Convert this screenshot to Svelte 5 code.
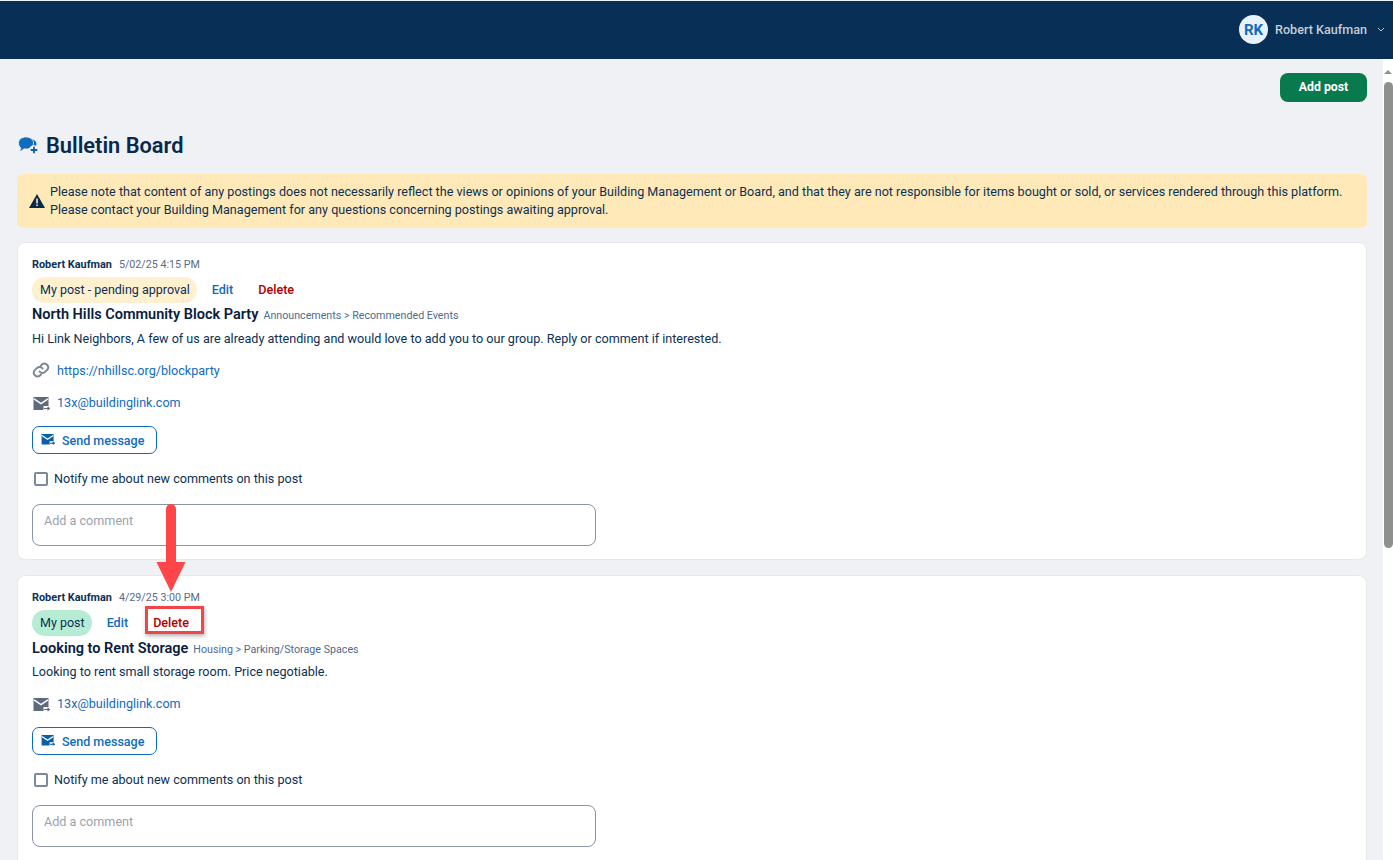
<script>
	const posts = [
		{
			author: 'Robert Kaufman',
			date: '5/02/25 4:15 PM',
			badge: 'My post - pending approval',
			pending: true,
			title: 'North Hills Community Block Party',
			category: 'Announcements > Recommended Events',
			body: 'Hi Link Neighbors, A few of us are already attending and would love to add you to our group. Reply or comment if interested.',
			link: 'https://nhillsc.org/blockparty',
			email: '13x@buildinglink.com'
		},
		{
			author: 'Robert Kaufman',
			date: '4/29/25 3:00 PM',
			badge: 'My post',
			pending: false,
			title: 'Looking to Rent Storage',
			category: 'Housing > Parking/Storage Spaces',
			body: 'Looking to rent small storage room. Price negotiable.',
			link: null,
			email: '13x@buildinglink.com'
		}
	];
</script>

<div class="page">
	<header class="topbar">
		<div class="user">
			<span class="avatar">RK</span>
			<span class="user-name">Robert Kaufman</span>
			<svg class="chev" width="8" height="5" viewBox="0 0 8 5"><path d="M1 1l3 3 3-3" fill="none" stroke="#b9c4d2" stroke-width="1"/></svg>
		</div>
	</header>

	<div class="body-row">
		<main class="content">
			<div class="actions">
				<button class="add-post">Add post</button>
			</div>

			<div class="heading">
				<svg width="21" height="19" viewBox="0 0 21 19">
					<ellipse cx="13.500" cy="8" rx="5" ry="4.500" fill="#0f6cbd"/>
					<path d="M8 1c4.300 0 7.500 2.500 7.500 6s-3.200 6-7.500 6c-.8 0-1.500-.1-2.200-.2C4.800 14.100 3.200 15 1.300 15.300c.8-.9 1.300-2 1.500-3.300C1.400 10.900.5 9.100.5 7 .5 3.500 3.700 1 8 1z" fill="#0f6cbd" stroke="#eff1f5" stroke-width=".8"/>
					<circle cx="16" cy="14" r="4.800" fill="#eff1f5"/>
					<path d="M16 10.700v6.600M12.700 14h6.600" stroke="#0f5ea8" stroke-width="1.800" fill="none"/>
				</svg>
				<h1>Bulletin Board</h1>
			</div>

			<div class="notice">
				<svg width="16" height="14" viewBox="0 0 16 14"><path d="M8 0l8 14H0z" fill="#08294d"/><path d="M7.200 4.500h1.600v5H7.200zM7.200 10.500h1.600v1.600H7.200z" fill="#ffe9b8"/></svg>
				<p>Please note that content of any postings does not necessarily reflect the views or opinions of your Building Management or Board, and that they are not responsible for items bought or sold, or services rendered through this platform.<br />Please contact your Building Management for any questions concerning postings awaiting approval.</p>
			</div>

			{#each posts as post}
				<article class="card">
					<div class="meta">
						<span class="author">{post.author}</span>
						<span class="date">{post.date}</span>
					</div>
					<div class="badge-row">
						<span class="badge" class:pending={post.pending}>{post.badge}</span>
						<a class="edit" href="#edit">Edit</a>
						<a class="delete" href="#delete">Delete</a>
					</div>
					<div class="title-row" class:tight={!post.pending}>
						<h2>{post.title}</h2>
						<span class="category">{post.category}</span>
					</div>
					<p class="text">{post.body}</p>
					{#if post.link}
						<div class="contact">
							<svg width="18" height="18" viewBox="0 0 24 24" fill="none" stroke="#7b8694" stroke-width="2.600" stroke-linecap="round">
								<path d="M10 14a5 5 0 0 0 7.500.5l3-3a5 5 0 0 0-7-7l-1.700 1.700"/>
								<path d="M14 10a5 5 0 0 0-7.500-.5l-3 3a5 5 0 0 0 7 7l1.700-1.700"/>
							</svg>
							<a href="#link">{post.link}</a>
						</div>
					{/if}
					<div class="contact">
						<svg class="mail-icon" width="18" height="15" viewBox="0 0 18 15">
							<path d="M1.500 0h15v9h-5v4h-10z" fill="#5d6b7c"/>
							<path d="M2 1.800l7 4.700 7-4.700" fill="none" stroke="#fff" stroke-width="1.500"/>
							<path d="M12 11.500h5.500M15.500 10l2 1.500-2 1.500" fill="none" stroke="#5d6b7c" stroke-width="1.100"/>
						</svg>
						<a href="#email">{post.email}</a>
					</div>
					<button class="send">
						<svg width="14" height="12" viewBox="1 0 17 15">
							<path d="M1.500 0h15v9h-5v4h-10z" fill="#0b5ea8"/>
							<path d="M2 1.800l7 4.700 7-4.700" fill="none" stroke="#fff" stroke-width="1.600"/>
							<path d="M12 11.500h5.500M15.500 10l2 1.500-2 1.500" fill="none" stroke="#0b5ea8" stroke-width="1.300"/>
						</svg>
						Send message
					</button>
					<label class="notify">
						<span class="box"></span>
						Notify me about new comments on this post
					</label>
					<div class="comment">Add a comment</div>
				</article>
			{/each}

			<!-- annotation over the second post -->
			<div class="annotation">
				<svg class="arrow" width="46" height="90" viewBox="0 0 46 90">
					<path d="M23 5v54" stroke="#ff4548" stroke-width="10" stroke-linecap="round" fill="none"/>
					<path d="M8.500 58h29L23 88z" fill="#ff4548"/>
				</svg>
				<div class="highlight"></div>
			</div>
		</main>

		<div class="scrollbar">
			<svg width="10" height="6" viewBox="0 0 10 6"><path d="M5 1l4 4H1z" fill="#8f8f8f"/></svg>
			<div class="thumb"></div>
		</div>
	</div>
</div>

<style>
	:global(body) {
		margin: 0;
		font-family: Roboto, 'Liberation Sans', sans-serif;
		background: #eff1f5;
	}

	.page {
		height: 860px;
		display: flex;
		flex-direction: column;
		overflow: hidden;
	}

	.topbar {
		height: 58px;
		margin-top: 1px;
		padding: 0 8px 1px 0;
		box-sizing: border-box;
		flex: none;
		background: #082f55;
		display: flex;
		align-items: center;
		justify-content: flex-end;
	}

	.user {
		display: flex;
		align-items: center;
	}

	.avatar {
		width: 29px;
		height: 29px;
		border-radius: 50%;
		background: #e8f2fd;
		color: #0f6cbd;
		font-weight: 700;
		font-size: 15px;
		display: flex;
		align-items: center;
		justify-content: center;
	}

	.user-name {
		margin-left: 7px;
		color: #c3ccd8;
		font-size: 12.600px;
		font-weight: 500;
	}

	.chev {
		margin-left: 10px;
	}

	.body-row {
		flex: 1;
		display: flex;
		min-height: 0;
	}

	.content {
		flex: 1;
		position: relative;
		padding: 14px 16px 0 17px;
		overflow: hidden;
		min-width: 0;
	}

	.actions {
		display: flex;
		justify-content: flex-end;
		height: 29px;
	}

	.add-post {
		width: 87px;
		height: 29px;
		padding: 0 0 2px;
		background: #087a4e;
		color: #fff;
		border: none;
		border-radius: 8px;
		font: 700 12.300px Roboto, sans-serif;
	}

	.heading {
		display: flex;
		align-items: center;
		gap: 7px;
		margin-top: 27px;
		height: 32px;
		padding-left: 1px;
	}

	h1 {
		margin: 0;
		font-size: 21.800px;
		font-weight: 600;
		color: #08294d;
	}

	.notice {
		margin-top: 13px;
		height: 54px;
		box-sizing: border-box;
		background: #ffe9b8;
		border-radius: 6px;
		display: flex;
		align-items: center;
		gap: 5px;
		padding: 0 12px;
	}

	.notice svg {
		flex: none;
	}

	.notice p {
		margin: 0;
		font-size: 12.600px;
		line-height: 18px;
		color: #0b3155;
	}

	.card {
		background: #fff;
		border: 1px solid #e6e8ec;
		border-radius: 8px;
		margin-top: 14px;
		padding: 15px 14px 14px;
		height: 318px;
		box-sizing: border-box;
	}

	.card + .card {
		margin-top: 15px;
	}

	.meta {
		display: flex;
		align-items: baseline;
		gap: 7px;
		line-height: 14px;
	}

	.author {
		font-size: 10.900px;
		font-weight: 700;
		color: #0b3155;
	}

	.date {
		font-size: 10.700px;
		color: #5a6b85;
	}

	.badge-row {
		display: flex;
		align-items: center;
		margin-top: 5px;
		height: 26px;
	}

	.badge {
		height: 26px;
		line-height: 26px;
		padding: 0 7px 0 8px;
		border-radius: 13px;
		font-size: 12.500px;
		background: #b6ecd4;
		color: #0b3155;
	}

	.badge.pending {
		background: #fff0d0;
	}

	.badge-row a {
		font-size: 12.600px;
		font-weight: 500;
		text-decoration: none;
		margin-bottom: 2px;
	}

	.edit {
		color: #0f6cbd;
		margin-left: 15px;
	}

	.delete {
		color: #b00000;
		margin-left: 25px;
	}

	.title-row {
		display: flex;
		align-items: baseline;
		gap: 5px;
		margin-top: 2px;
		line-height: 20px;
	}

	.title-row.tight {
		margin-top: 3px;
	}

	h2 {
		margin: 0;
		font-size: 14.500px;
		font-weight: 600;
		color: #08203c;
	}

	.category {
		font-size: 10.700px;
		color: #4f6a8c;
	}

	.text {
		margin: 4px 0 0;
		font-size: 12.600px;
		line-height: 18px;
		color: #0b3155;
	}

	.title-row.tight + .text {
		margin-top: 3px;
	}

	.contact {
		display: flex;
		align-items: center;
		margin-top: 13px;
		height: 18px;
		gap: 7px;
	}

	.contact + .contact {
		margin-top: 14px;
	}

	.contact a {
		font-size: 12.600px;
		color: #0f6cbd;
		text-decoration: none;
	}

	.contact svg {
		flex: none;
	}

	.contact .mail-icon {
		margin-top: 4px;
	}

	.send {
		display: flex;
		align-items: center;
		gap: 7px;
		margin-top: 15px;
		width: 125px;
		height: 28px;
		padding: 0 0 0 8px;
		background: #fff;
		border: 1px solid #0f6cbd;
		border-radius: 7px;
		color: #0f6cbd;
		font: 500 12.500px Roboto, sans-serif;
	}

	.notify {
		display: flex;
		align-items: center;
		gap: 6px;
		margin-top: 16px;
		padding-left: 2px;
		font-size: 12.600px;
		line-height: 18px;
		color: #0b3155;
	}

	.box {
		flex: none;
		box-sizing: border-box;
		width: 14px;
		height: 14px;
		border: 2px solid #7a8a9c;
		border-radius: 2px;
	}

	.comment {
		margin-top: 16px;
		width: 564px;
		height: 42px;
		box-sizing: border-box;
		border: 1px solid #8795a6;
		border-radius: 8px;
		padding: 8px 11px;
		font-size: 12.600px;
		line-height: 16px;
		color: #9aa2ad;
	}

	.annotation {
		position: absolute;
		left: 0;
		top: 0;
	}

	.arrow {
		position: absolute;
		left: 147.500px;
		top: 445px;
	}

	.highlight {
		position: absolute;
		left: 145px;
		top: 547px;
		width: 59px;
		height: 28px;
		box-sizing: border-box;
		border: 3px solid #f14649;
		box-shadow: 1px 2px 4px rgba(0, 0, 0, 0.3);
	}

	.scrollbar {
		width: 10px;
		flex: none;
		background: #fff;
		display: flex;
		flex-direction: column;
		align-items: center;
		padding-top: 10px;
	}

	.thumb {
		width: 9px;
		height: 466px;
		margin-top: 7px;
		border-radius: 5px;
		background: #8f8f8f;
	}
</style>
